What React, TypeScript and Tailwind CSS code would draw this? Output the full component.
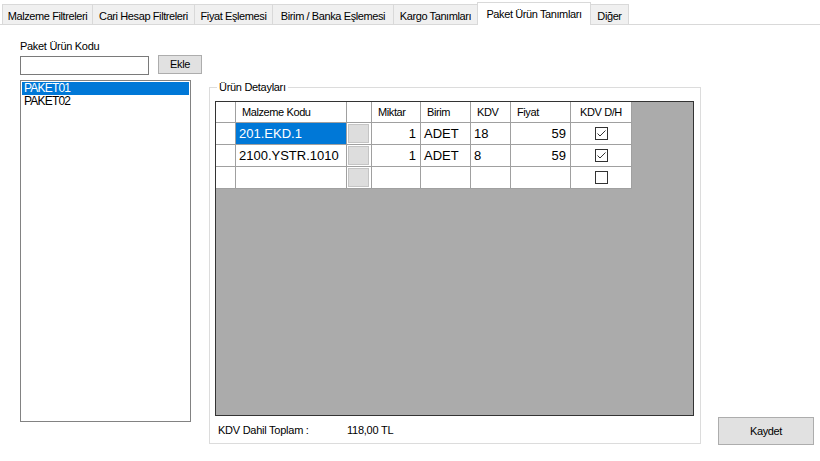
import React from "react";

const tabs = [
  { label: "Malzeme Filtreleri", w: 90 },
  { label: "Cari Hesap Filtreleri", w: 102 },
  { label: "Fiyat Eşlemesi", w: 78 },
  { label: "Birim / Banka Eşlemesi", w: 121 },
  { label: "Kargo Tanımları", w: 84 },
  { label: "Paket Ürün Tanımları", w: 114, active: true },
  { label: "Diğer", w: 38 },
];

const cols = [
  { key: "rh", w: 20, title: "" },
  { key: "kod", w: 111, title: "Malzeme Kodu" },
  { key: "btn", w: 25, title: "" },
  { key: "miktar", w: 49, title: "Miktar" },
  { key: "birim", w: 50, title: "Birim" },
  { key: "kdv", w: 40, title: "KDV" },
  { key: "fiyat", w: 60, title: "Fiyat" },
  { key: "dh", w: 61, title: "KDV D/H" },
];

const rows = [
  { kod: "201.EKD.1", miktar: "1", birim: "ADET", kdv: "18", fiyat: "59", dh: true, sel: true },
  { kod: "2100.YSTR.1010", miktar: "1", birim: "ADET", kdv: "8", fiyat: "59", dh: true, sel: false },
  { kod: "", miktar: "", birim: "", kdv: "", fiyat: "", dh: false, sel: false },
];

function CheckBox({ checked }: { checked: boolean }) {
  return (
    <svg width="13" height="13" viewBox="0 0 13 13">
      <rect x="0.5" y="0.5" width="12" height="12" fill="#fff" stroke="#333" strokeWidth="1" />
      {checked && <polyline points="2.5,6.5 5,9 10.5,3.5" fill="none" stroke="#333" strokeWidth="1" />}
    </svg>
  );
}

export default function App() {
  return (
    <div className="w-[820px] h-[461px] bg-white overflow-hidden text-black font-['Liberation_Sans',Arial,sans-serif]">
      {/* Tab strip */}
      <div className="h-[25px] flex items-end pl-[2px] border-b border-[#d9d9d9]">
        {tabs.map((t, i) =>
          t.active ? (
            <div
              key={t.label}
              style={{ width: t.w }}
              className="h-[23px] -mb-px bg-white border-t border-l border-r border-[#d9d9d9] flex justify-center pt-[5px] text-[11px] leading-[13px] tracking-[-0.4px] whitespace-nowrap"
            >
              {t.label}
            </div>
          ) : (
            <div
              key={t.label}
              style={{ width: t.w }}
              className={
                "h-[20px] bg-[#f0f0f0] border-t border-[#d9d9d9] flex justify-center pt-[5px] text-[11px] leading-[13px] tracking-[-0.4px] whitespace-nowrap " +
                (i === tabs.length - 1 ? "border-r " : "") +
                (i > 0 && tabs[i - 1].active ? "" : "border-l")
              }
            >
              {t.label}
            </div>
          )
        )}
      </div>

      {/* Content */}
      <div className="flex items-start">
        {/* Left column */}
        <div className="ml-[20px] w-[171px] shrink-0 flex flex-col">
          <div className="mt-[15px] text-[11px] leading-[13px] tracking-[-0.3px]">Paket Ürün Kodu</div>
          <div className="mt-[2px] flex items-start">
            <div className="shrink-0 mt-[1px] w-[129px] h-[19px] border border-[#7a7a7a] bg-white" />
            <div className="shrink-0 ml-[9px] w-[44px] h-[19px] bg-[#e1e1e1] border border-[#adadad] flex items-center justify-center text-[11px] tracking-[-0.4px]">
              Ekle
            </div>
          </div>
          <div className="mt-[5px] w-[171px] h-[342px] border border-[#828282] p-[1px] bg-white">
            <div className="h-[13px] bg-[#0078d7] text-white text-[12px] leading-[13px] pl-[2px] tracking-[-0.8px]">
              PAKET01
            </div>
            <div className="h-[13px] text-[12px] leading-[13px] pl-[2px] tracking-[-0.8px]">
              PAKET02
            </div>
          </div>
        </div>

        {/* Group box */}
        <fieldset className="shrink-0 ml-[18px] mt-[56px] w-[492px] border border-[#dcdcdc] pl-[5px] pr-[6px] pb-[6px]">
          <legend className="ml-[2px] px-[2px] text-[11px] leading-[13px] tracking-[-0.3px]">Ürün Detayları</legend>
          <div className="mt-[7px] h-[315px] border border-[#333] bg-[#ababab]">
            <div className="flex flex-col items-start">
              {/* header */}
              <div className="flex h-[21px] bg-white">
                {cols.map((c) => (
                  <div
                    key={c.key}
                    style={{ width: c.w }}
                    className={
                      "h-[21px] border-r border-b border-[#a0a0a0] flex items-center text-[11px] tracking-[-0.4px] whitespace-nowrap " +
                      (c.key === "dh" ? "justify-center" : "pl-[6px]")
                    }
                  >
                    {c.title}
                  </div>
                ))}
              </div>
              {rows.map((r, ri) => (
                <div key={ri} className="flex h-[22px] bg-white">
                  {cols.map((c) => {
                    const base = "h-[22px] border-r border-b border-[#a0a0a0] flex items-center text-[13px] whitespace-nowrap ";
                    if (c.key === "rh") return <div key={c.key} style={{ width: c.w }} className={base} />;
                    if (c.key === "btn")
                      return (
                        <div key={c.key} style={{ width: c.w }} className={base + "p-[1px] pr-[2px]"}>
                          <div className="w-full h-full bg-[#dddddd] border border-[#c4c4c4]" />
                        </div>
                      );
                    if (c.key === "dh")
                      return (
                        <div key={c.key} style={{ width: c.w }} className={base + "justify-center"}>
                          <CheckBox checked={r.dh} />
                        </div>
                      );
                    const val = (r as any)[c.key] as string;
                    const right = c.key === "miktar" || c.key === "fiyat";
                    const sel = r.sel && c.key === "kod";
                    return (
                      <div
                        key={c.key}
                        style={{ width: c.w }}
                        className={
                          base +
                          (right ? "justify-end pr-[4px] " : "pl-[3px] ") +
                          (sel ? "bg-[#0078d7] text-white" : "")
                        }
                      >
                        {val}
                      </div>
                    );
                  })}
                </div>
              ))}
            </div>
          </div>
          <div className="mt-[8px] flex pl-[3px] text-[11px] leading-[13px] tracking-[-0.25px]">
            <span className="w-[129px]">KDV Dahil Toplam :</span>
            <span>118,00 TL</span>
          </div>
        </fieldset>

        {/* Save button */}
        <div className="shrink-0 ml-[17px] mt-[392px] w-[96px] h-[28px] bg-[#e1e1e1] border border-[#adadad] flex items-center justify-center text-[11px] tracking-[-0.4px]">
          Kaydet
        </div>
      </div>
    </div>
  );
}
